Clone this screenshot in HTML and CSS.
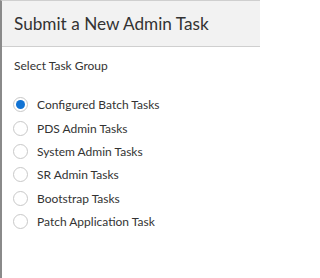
FILE: index.html
```html
<!DOCTYPE html>
<html>
<head>
<meta charset="utf-8">
<link rel="stylesheet" href="styles.css">
</head>
<body>
<div class="dialog">
  <div class="header"><h1 class="title">Submit a New Admin Task</h1></div>
  <div class="body">
    <div class="label">Select Task Group</div>
    <ul class="options">
      <li class="option"><span class="radio checked"></span><span class="text">Configured Batch Tasks</span></li>
      <li class="option"><span class="radio"></span><span class="text">PDS Admin Tasks</span></li>
      <li class="option"><span class="radio"></span><span class="text">System Admin Tasks</span></li>
      <li class="option"><span class="radio"></span><span class="text">SR Admin Tasks</span></li>
      <li class="option"><span class="radio"></span><span class="text">Bootstrap Tasks</span></li>
      <li class="option"><span class="radio"></span><span class="text">Patch Application Task</span></li>
    </ul>
  </div>
</div>
</body>
</html>
```
FILE: styles.css
```css
html, body {
  margin: 0;
  padding: 0;
  background: #fff;
}
body {
  font-family: "Lato", "Open Sans", sans-serif;
  color: #333;
}
.dialog {
  width: 260px;
  height: 278px;
  box-sizing: border-box;
  border-left: 2px solid #8a8a8a;
  border-top: 1px solid #cfcfcf;
  background: #fff;
}
.header {
  background: #f2f2f2;
  border-bottom: 1px solid #cfcfcf;
  height: 45px;
  display: flex;
  align-items: center;
  padding-left: 12px;
}
.title {
  margin: 0 0 1px 0;
  font-weight: 400;
  font-size: 17.2px;
  color: #333;
}
.body {
  padding: 9px 0 0 12px;
}
.label {
  font-size: 12px;
  line-height: 20px;
  color: #333;
}
.options {
  list-style: none;
  margin: 17px 0 0 0;
  padding: 0;
}
.option {
  display: flex;
  align-items: center;
  height: 23.4px;
  font-size: 12px;
  color: #333;
}
.radio {
  width: 15px;
  height: 15px;
  box-sizing: border-box;
  border: 1px solid #c8c8c8;
  border-radius: 50%;
  background: #fff;
  margin-left: -1px;
  margin-right: 9px;
  display: flex;
  align-items: center;
  justify-content: center;
}
.radio.checked::after {
  content: "";
  width: 9px;
  height: 9px;
  border-radius: 50%;
  background: #1173d4;
}
```
